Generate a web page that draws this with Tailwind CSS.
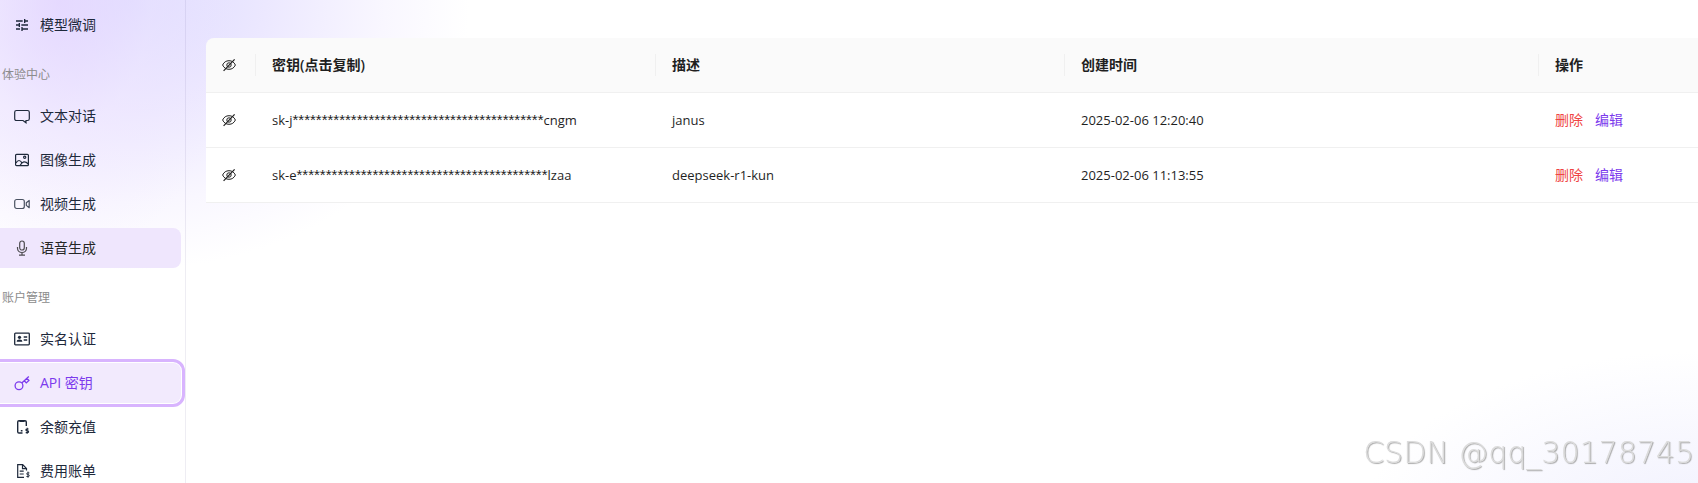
<!DOCTYPE html>
<html lang="zh-CN">

<head>
    <meta charset="UTF-8" />
    <meta name="viewport" content="width=device-width, initial-scale=1.0" />
    <title>API 密钥</title>
    <script src="https://cdn.jsdelivr.net/npm/@tailwindcss/browser@4"></script>
</head>

<body class="min-h-screen overflow-x-hidden bg-white bg-[radial-gradient(ellipse_180px_260px_at_60px_0px,#e6d4ff99,#f1e6ff66_50%,transparent),radial-gradient(ellipse_340px_270px_at_130px_0px,#dcdaff,#ece8ff_40%,#f9f7ff_75%,transparent),radial-gradient(ellipse_340px_180px_at_100%_110%,#f0f0fe,transparent)] font-['Open_Sans','Noto_Sans_CJK_SC',sans-serif] text-sm text-[#1f1f1f]">

    <!-- shared icons -->
    <svg class="hidden">
        <symbol id="eye-off" viewBox="0 0 14 14" fill="none" stroke="currentColor">
            <path d="M.6 7Q2.600 2.700 7 2.700T13.400 7Q11.400 11.300 7 11.300T.6 7z" />
            <circle cx="7" cy="7" r="2.200" />
            <path d="M1.600 12.800L12.600 1.400" stroke-width="1.200" />
        </symbol>
    </svg>

    <div class="flex min-h-screen">
        <aside class="h-screen w-[186px] shrink-0 overflow-hidden border-r border-[#5b4b8a]/10 pt-[5px] pr-1">
            <nav class="text-[#1e293b]">
                <a href="#" class="flex h-10 items-center gap-2.5 rounded-r-lg pl-[14px]">
                    <svg class="size-4" viewBox="0 0 24 24" fill="currentColor"><path d="M3 17v2h6v-2H3zM3 5v2h10V5H3zm10 16v-2h8v-2h-8v-2h-2v6h2zM7 9v2H3v2h4v2h2V9H7zm14 4v-2H11v2h10zm-6-4h2V7h4V5h-4V3h-2v6z" /></svg>
                    模型微调
                </a>

                <h2 class="pt-[21px] pb-3 pl-[2px] text-xs/[18px] text-[#8c8c8c]">体验中心</h2>
                <a href="#" class="mb-1 flex h-10 items-center gap-2.5 rounded-r-lg pl-[14px]">
                    <svg class="size-4" viewBox="0 0 16 16" fill="none" stroke="currentColor" stroke-width="1.200"><path d="M2.500 2.500h11q1.800 0 1.800 1.800v6.400q0 1.800-1.800 1.800H12v2.300L9 12.500H2.500Q.7 12.500.7 10.700V4.300Q.7 2.500 2.500 2.500z" /></svg>
                    文本对话
                </a>
                <a href="#" class="mb-1 flex h-10 items-center gap-2.5 rounded-r-lg pl-[14px]">
                    <svg class="size-4" viewBox="0 0 16 16" fill="none" stroke="currentColor" stroke-width="1.200"><rect x="1.600" y="2.300" width="12.800" height="11.400" rx="1" /><circle cx="10.700" cy="5.300" r="1.100" /><path d="M2 10.800q3-4.600 6 0M6 13.500q3.500-6.500 8.300-1.500" /></svg>
                    图像生成
                </a>
                <a href="#" class="mb-1 flex h-10 items-center gap-2.5 rounded-r-lg pl-[14px]">
                    <svg class="size-4 opacity-80" viewBox="0 0 16 16" fill="none" stroke="currentColor" stroke-width="1.200"><rect x=".7" y="3.500" width="9.600" height="9" rx="2" /><path d="M12.300 6.800l2.900-2.300v7.200L12.300 9.400z" stroke-linejoin="round" /></svg>
                    视频生成
                </a>
                <a href="#" class="flex h-10 items-center gap-2.5 rounded-r-lg bg-[#efe6fd] pl-[14px] text-[#262626]">
                    <svg class="size-4 opacity-80" viewBox="0 0 16 16" fill="none" stroke="currentColor" stroke-width="1.200"><rect x="5.700" y="1" width="4.600" height="9" rx="2.300" /><path d="M3.500 7v1.200a4.500 4.300 0 0 0 9 0V7M8 12.500v2.500M5 15.200h6" /></svg>
                    语音生成
                </a>

                <h2 class="pt-[21px] pb-3 pl-[2px] text-xs/[18px] text-[#8c8c8c]">账户管理</h2>
                <a href="#" class="mb-1 flex h-10 items-center gap-2.5 rounded-r-lg pl-[14px]">
                    <svg class="size-4" viewBox="0 0 16 16" fill="none" stroke="currentColor" stroke-width="1.300"><rect x=".7" y="2.200" width="14.600" height="11.600" rx=".8" /><circle cx="5.500" cy="6.300" r="1.600" fill="currentColor" stroke="none" /><path d="M2.700 10.800q0-2.300 2.800-2.300t2.800 2.300z" fill="currentColor" stroke="none" /><path d="M9.700 6h3.500M9.700 9h3.500" /></svg>
                    实名认证
                </a>
                <a href="#" class="mb-1 flex h-10 items-center gap-2.5 rounded-r-lg bg-[#f2eafd] pl-[14px] text-[#7c3aed] outline-3 outline-offset-1 outline-[#d8b4fe]" aria-current="page">
                    <svg class="size-4" viewBox="0 0 16 16" fill="none" stroke="currentColor" stroke-width="1.300"><circle cx="5" cy="10.700" r="3.900" /><path d="M7.800 8L14.800 1.500M10.300 5.700l2 2.200 2.600-2.400-2-2.200" /></svg>
                    API 密钥
                </a>
                <a href="#" class="mb-1 flex h-10 items-center gap-2.5 rounded-r-lg pl-[14px]">
                    <svg class="size-4" viewBox="0 0 16 16" fill="none" stroke="currentColor" stroke-width="1.400"><path d="M8.500 14H5Q3.700 14 3.700 12.700V3q0-1.300 1.300-1.300h6q1.300 0 1.300 1.300v4M5.500 2.200h5M6.800 11.800h1.700" /><path d="M14.600 10h-1.700q-1 0-1 .9t1 .9h.7q1 0 1 .9t-1 .9h-1.900M13.200 8.800v6" stroke-width="1.100" /></svg>
                    余额充值
                </a>
                <a href="#" class="flex h-10 items-center gap-2.5 rounded-r-lg pl-[14px]">
                    <svg class="size-4" viewBox="0 0 16 16" fill="none" stroke="currentColor" stroke-width="1.200"><path d="M10 14.300H3.700V1.700h5l3.800 3.800V7.500M8.500 1.700v4h4M5.700 8.200h4M5.700 11h4" /><path d="M15.400 9.900h-1.700q-1 0-1 .9t1 .9h.6q1 0 1 .9t-1 .9h-1.900M14 8.600v6.200" stroke-width=".9" /></svg>
                    费用账单
                </a>
            </nav>
        </aside>

        <main class="min-w-0 flex-1 pt-[38px] pl-5">
            <table class="w-full table-fixed border-separate border-spacing-0 text-left text-[13px]/[22px]">
                <colgroup>
                    <col class="w-[50px]" />
                    <col class="w-[400px]" />
                    <col class="w-[409px]" />
                    <col class="w-[474px]" />
                    <col />
                </colgroup>
                <thead class="text-sm/[22px]">
                    <tr class="h-[55px]">
                        <th class="relative rounded-tl-lg border-b border-[#f0f0f0] bg-[#fafafa] px-4 after:absolute after:top-4 after:right-0 after:h-[22px] after:w-px after:bg-[#f0f0f0]">
                            <button class="block" aria-label="显示全部密钥"><svg class="size-[14px]"><use href="#eye-off" /></svg></button>
                        </th>
                        <th class="relative border-b border-[#f0f0f0] bg-[#fafafa] px-4 font-semibold after:absolute after:top-4 after:right-0 after:h-[22px] after:w-px after:bg-[#f0f0f0]">密钥(点击复制)</th>
                        <th class="relative border-b border-[#f0f0f0] bg-[#fafafa] px-4 font-semibold after:absolute after:top-4 after:right-0 after:h-[22px] after:w-px after:bg-[#f0f0f0]">描述</th>
                        <th class="relative border-b border-[#f0f0f0] bg-[#fafafa] px-4 font-semibold after:absolute after:top-4 after:right-0 after:h-[22px] after:w-px after:bg-[#f0f0f0]">创建时间</th>
                        <th class="border-b border-[#f0f0f0] bg-[#fafafa] px-4 font-semibold">操作</th>
                    </tr>
                </thead>
                <tbody class="bg-white">
                    <tr class="h-[55px]">
                        <td class="border-b border-[#f0f0f0] px-4"><button class="block" aria-label="显示密钥"><svg class="size-[14px]"><use href="#eye-off" /></svg></button></td>
                        <td class="border-b border-[#f0f0f0] px-4 whitespace-nowrap">sk-j<span class="font-['Liberation_Sans'] text-[15px]/[22px]">*******************************************</span>cngm</td>
                        <td class="border-b border-[#f0f0f0] px-4">janus</td>
                        <td class="border-b border-[#f0f0f0] px-4">2025-02-06 12:20:40</td>
                        <td class="border-b border-[#f0f0f0] px-4 text-sm/[22px]">
                            <div class="flex gap-3">
                                <button class="text-[#ef4444]">删除</button>
                                <button class="text-[#7c3aed]">编辑</button>
                            </div>
                        </td>
                    </tr>
                    <tr class="h-[55px]">
                        <td class="border-b border-[#f0f0f0] px-4"><button class="block" aria-label="显示密钥"><svg class="size-[14px]"><use href="#eye-off" /></svg></button></td>
                        <td class="border-b border-[#f0f0f0] px-4 whitespace-nowrap">sk-e<span class="font-['Liberation_Sans'] text-[15px]/[22px]">*******************************************</span>lzaa</td>
                        <td class="border-b border-[#f0f0f0] px-4">deepseek-r1-kun</td>
                        <td class="border-b border-[#f0f0f0] px-4">2025-02-06 11:13:55</td>
                        <td class="border-b border-[#f0f0f0] px-4 text-sm/[22px]">
                            <div class="flex gap-3">
                                <button class="text-[#ef4444]">删除</button>
                                <button class="text-[#7c3aed]">编辑</button>
                            </div>
                        </td>
                    </tr>
                </tbody>
            </table>
        </main>
    </div>

    <p class="fixed right-1 bottom-3 font-['DejaVu_Sans'] text-3xl font-extralight text-[#dcdcdc] [text-shadow:1px_1px_1px_#a8a8a8]">CSDN @qq_30178745</p>
</body>

</html>
